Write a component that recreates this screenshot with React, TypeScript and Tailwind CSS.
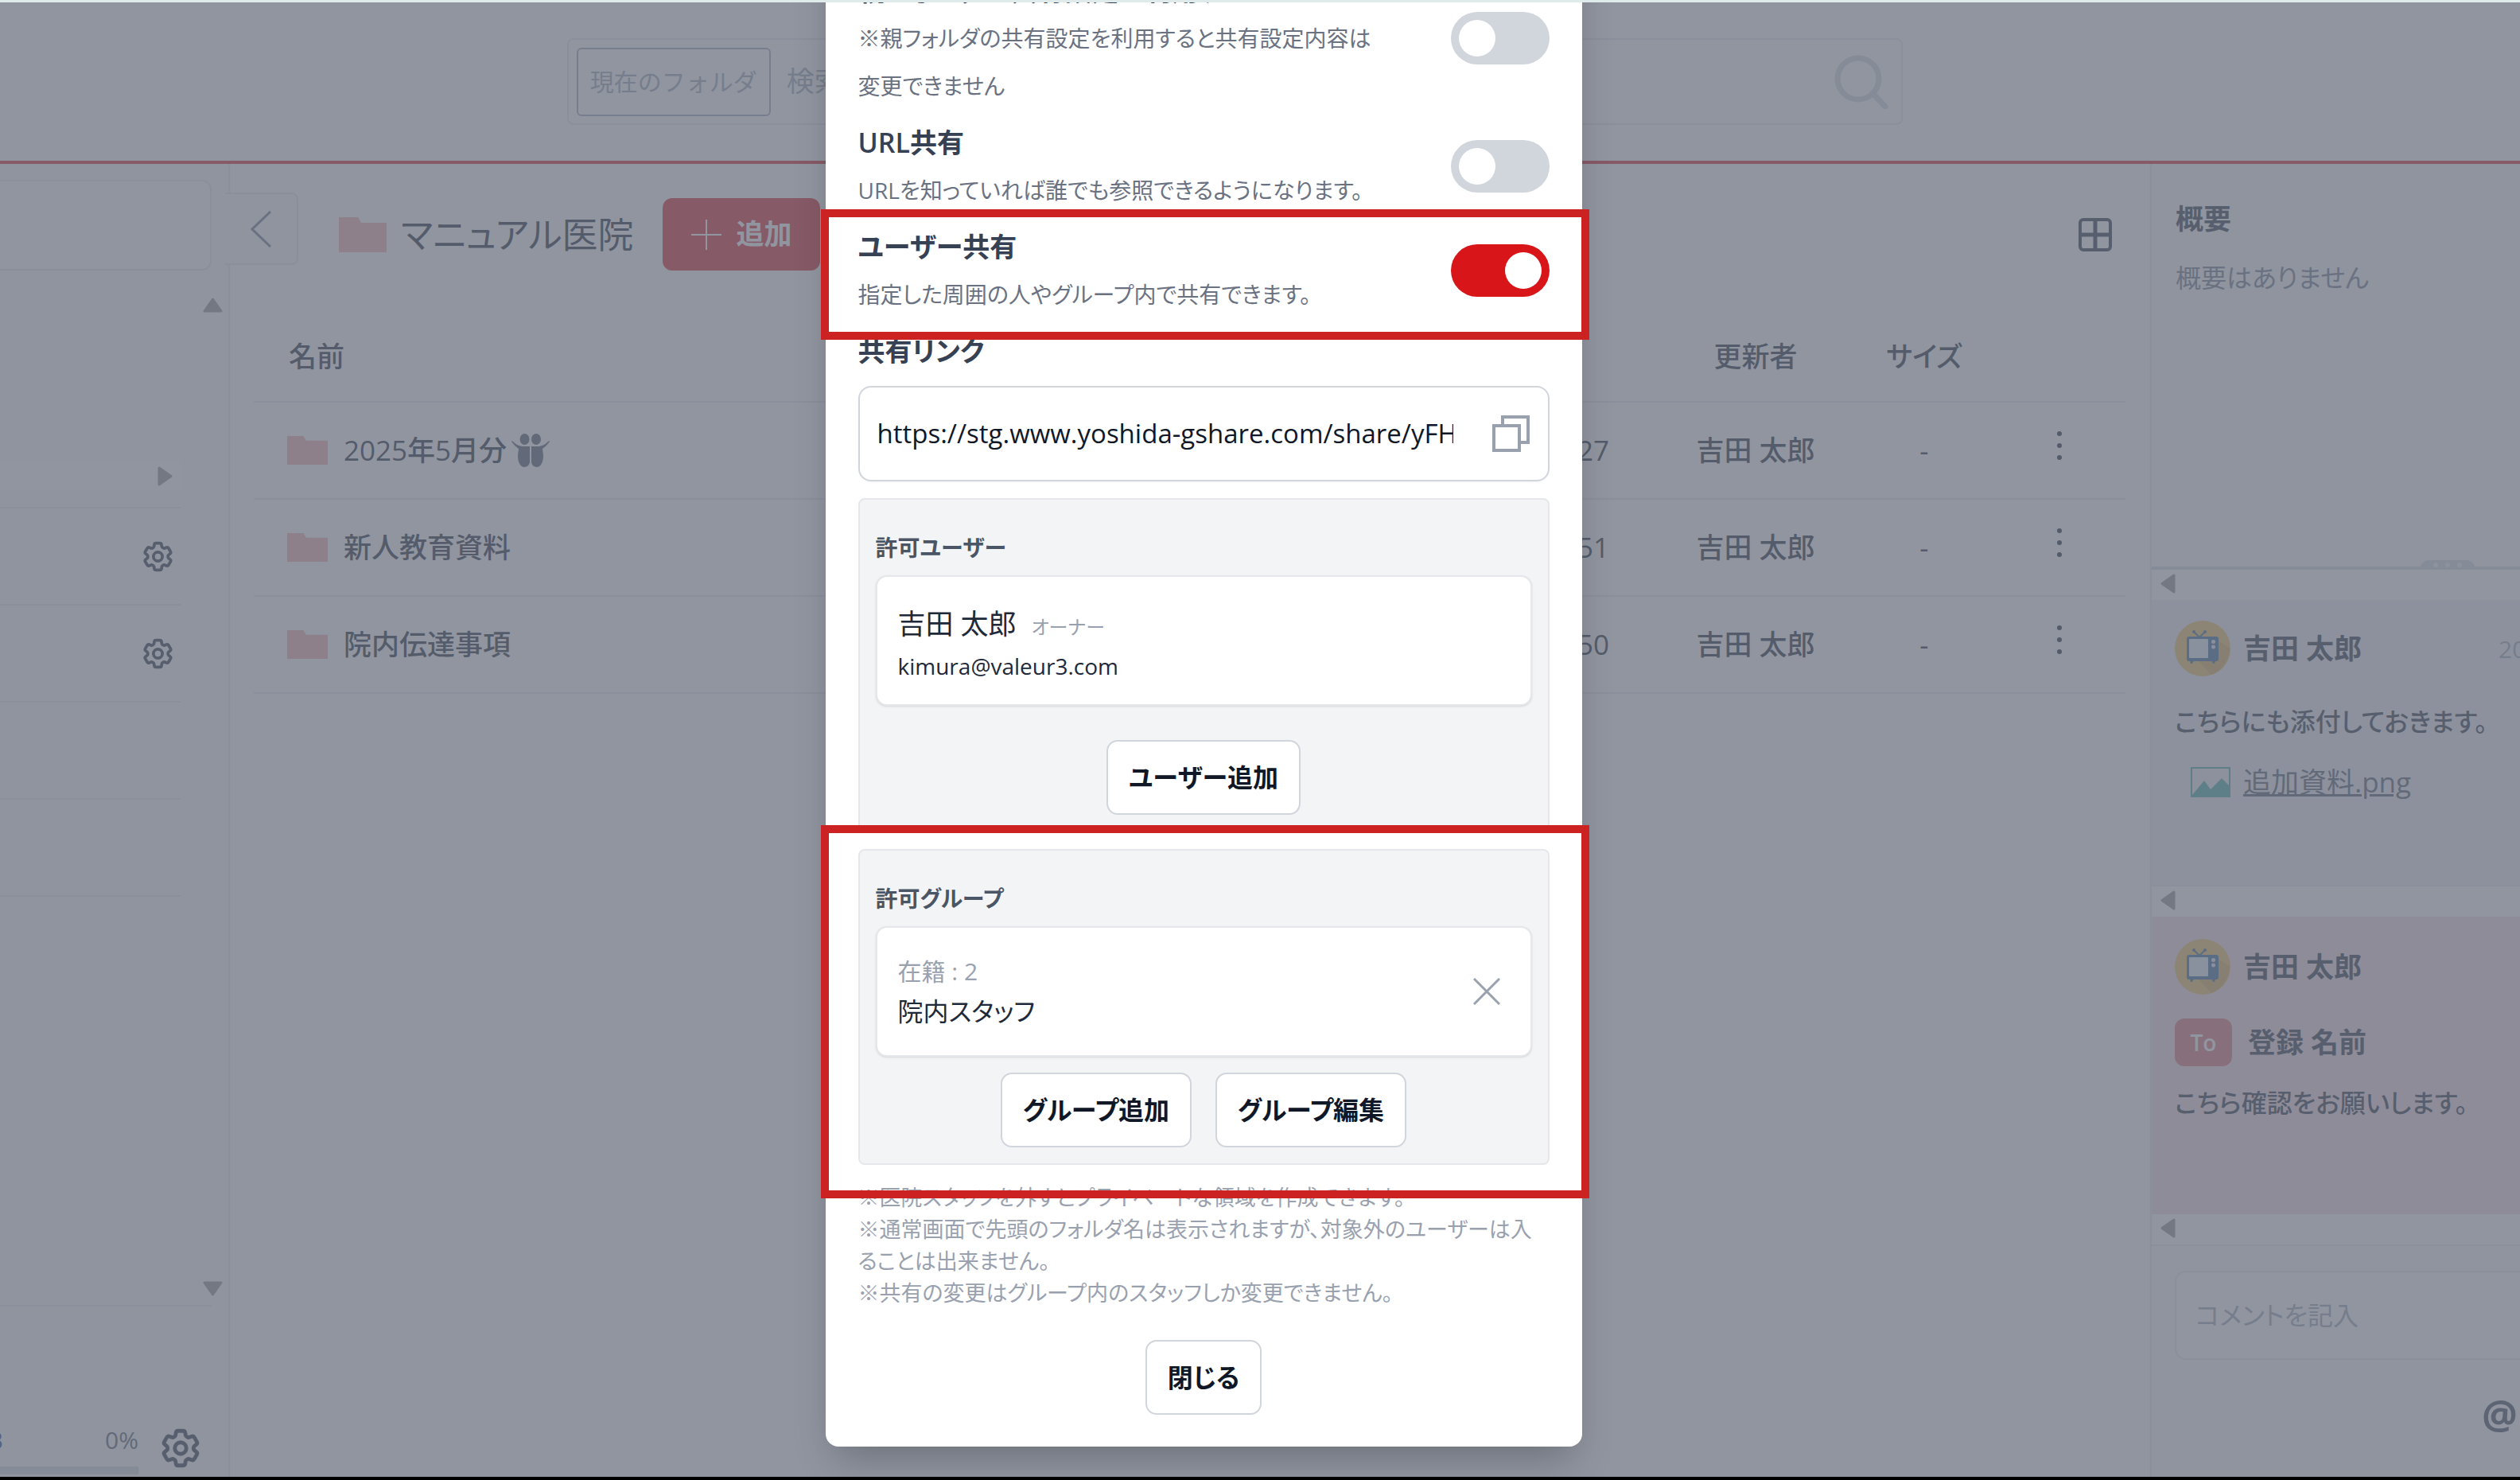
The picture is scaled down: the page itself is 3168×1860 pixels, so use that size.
import React, { useState } from "react";
import { HiOutlineCog6Tooth } from "react-icons/hi2";

const files = [
  { name: "2025年5月分", time: "10:27", owner: "吉田 太郎", shared: true },
  { name: "新人教育資料", time: "10:51", owner: "吉田 太郎", shared: false },
  { name: "院内伝達事項", time: "10:50", owner: "吉田 太郎", shared: false },
];

const buttonClass =
  "h-[94px] rounded-[14px] border-2 border-gray-300 bg-white px-[26px] text-[32px] font-semibold text-gray-900";

function FolderIcon({ className }: { className: string }) {
  return (
    <svg viewBox="0 0 60 44" preserveAspectRatio="none" className={className}>
      <path d="M0 0h24l4 7h32v37H0z" fill="#f4aaa8" />
    </svg>
  );
}

function SharedIcon() {
  return (
    <svg viewBox="0 0 48 42" className="h-[42px] w-[48px] text-gray-600" fill="currentColor">
      <ellipse cx="16.500" cy="7" rx="6" ry="7" />
      <ellipse cx="31" cy="7" rx="6" ry="7" />
      <path d="M1 9c5 5 9 7 14 7h8v19c0 4-3 7-7 7-5 0-8-7-8-14 0-4 1-6 1-9C6 17 3 14 0 10z" />
      <path d="M47 9c-5 5-9 7-14 7h-8v19c0 4 3 7 7 7 5 0 8-7 8-14 0-4-1-6-1-9 3-2 6-5 9-9z" />
    </svg>
  );
}

// Scrollbar arrow, drawn pointing left and turned by the caller
function Arrow({ className = "" }: { className?: string }) {
  return (
    <svg viewBox="0 0 19 25" className={`h-[25px] w-[19px] ${className}`}>
      <path
        d="M17 2v21L2 12.5z"
        fill="#8a8a8a"
        stroke="#8a8a8a"
        strokeWidth="3"
        strokeLinejoin="round"
      />
    </svg>
  );
}

function Avatar() {
  return (
    <svg viewBox="0 0 70 70" className="size-[70px] shrink-0">
      <circle cx="35" cy="35" r="35" fill="#f0bd50" />
      <path d="M54 25l15 9c0 16-9 29-23 34L30 51z" fill="#d9a94a" />
      <path d="M24 14l7 7 7-7" stroke="#2f5d94" strokeWidth="2" fill="none" />
      <circle cx="24" cy="14" r="2" fill="#2f5d94" />
      <circle cx="38" cy="14" r="2" fill="#2f5d94" />
      <rect x="15" y="20" width="40" height="31" rx="3" fill="#2f5d94" />
      <path d="M19 50h5l-2 4h-2zM46 50h5l-1 4h-2z" fill="#2f5d94" />
      <rect x="18" y="23" width="24" height="24" rx="1" fill="#e8eef5" />
      <circle cx="48.500" cy="26.500" r="2.500" fill="#e8eef5" />
      <circle cx="48.500" cy="33" r="2.500" fill="#e8eef5" />
    </svg>
  );
}

function ImageIcon() {
  return (
    <svg viewBox="0 0 50 38" className="h-[38px] w-[50px]">
      <rect x="1" y="1" width="48" height="36" fill="none" stroke="#3aa89c" strokeWidth="2" />
      <path d="M2 35l15-18 8 11 14-14 10 10v13H2z" fill="#3aa89c" />
    </svg>
  );
}

function Header() {
  return (
    <header className="flex h-[203px] shrink-0 items-center border-b-4 border-[#d81518] bg-white">
      <form className="ml-[22.500%] flex h-[109px] w-[53%] items-center rounded-lg border-2 border-gray-200 bg-white pr-4 pl-[10px]">
        <button
          type="button"
          className="h-[86px] w-[244px] shrink-0 rounded-md border-2 border-gray-400 text-[30px] whitespace-nowrap text-gray-400 [font-feature-settings:normal]"
        >
          現在のフォルダ
        </button>
        <input
          type="search"
          aria-label="検索"
          placeholder="検索"
          className="ml-[20px] min-w-0 flex-1 text-[35px] placeholder:text-gray-400"
        />
        <svg viewBox="0 0 68 68" className="size-[68px] text-gray-300" fill="none" stroke="currentColor">
          <circle cx="30" cy="30" r="26" strokeWidth="7" />
          <path d="M48 48l16 17" strokeWidth="7" strokeLinecap="round" />
        </svg>
      </form>
    </header>
  );
}

function Sidebar() {
  return (
    <aside className="flex w-[289px] shrink-0 flex-col border-r-2 border-gray-200 bg-gray-50">
      <div className="mt-[20px] mr-[21px] h-[114px] rounded-r-xl border-2 border-l-0 border-gray-200 bg-white" />
      <div className="mt-[23px] flex flex-1 justify-between">
        <ul className="w-[227px]">
          <li className="flex h-[276px] items-end border-b-2 border-gray-200 pb-[20px]">
            <div className="flex h-[38px] w-full items-center justify-end bg-white pr-[10px]">
              <Arrow className="rotate-180" />
            </div>
          </li>
          {[true, true, false, false].map((hasSettings, index) => (
            <li
              key={index}
              className="flex h-[122px] items-center justify-end border-b-2 border-gray-200 pr-[6px] text-[45px] text-gray-800"
            >
              {hasSettings && (
                <button aria-label="設定">
                  <HiOutlineCog6Tooth strokeWidth={2} />
                </button>
              )}
            </li>
          ))}
        </ul>
        <div className="flex w-[40px] flex-col items-center justify-between py-2">
          <Arrow className="rotate-90" />
          <Arrow className="-rotate-90" />
        </div>
      </div>
      <div className="mr-[21px] flex h-[216px] items-end border-t-2 border-gray-200 pb-[3px]">
        <div className="w-[174px]">
          <div className="flex justify-between text-[30px] leading-[40px] text-gray-600">
            <span className="flex w-1 justify-end overflow-hidden text-blue-900">GB</span>
            <span>0%</span>
          </div>
          <div className="mt-[13px] h-[10px] bg-gray-300" />
        </div>
        <button aria-label="容量設定" className="mb-[4px] ml-[24px] text-[58px] text-gray-800">
          <HiOutlineCog6Tooth strokeWidth={2} />
        </button>
      </div>
    </aside>
  );
}

function FileList() {
  return (
    <main className="min-w-0 flex-1 bg-white">
      <div className="flex h-[187px] items-start pt-[36px] pr-[48px]">
        <button
          aria-label="戻る"
          className="-ml-[6px] flex h-[91px] w-[92px] items-center justify-center rounded-r-lg border-2 border-l-0 border-gray-200 bg-gray-50 text-gray-500"
        >
          <svg viewBox="0 0 26 46" className="h-[46px] w-[26px]" fill="none" stroke="currentColor">
            <path d="M25 1L2 23l23 22" strokeWidth="3" />
          </svg>
        </button>
        <div className="mt-[7px] ml-[51px] flex h-[91px] flex-1 items-center whitespace-nowrap">
          <FolderIcon className="h-[44px] w-[60px]" />
          <h1 className="ml-[18px] text-[45px] text-gray-900">マニュアル医院</h1>
          <button className="ml-[36px] flex h-[91px] w-[198px] items-center justify-center gap-[18px] rounded-xl bg-[#d81518] text-[35px] font-semibold text-white">
            <svg viewBox="0 0 40 40" className="size-[40px]" stroke="currentColor" strokeWidth="2">
              <path d="M20 1v38M1 20h38" />
            </svg>
            追加
          </button>
          <button aria-label="グリッド表示" className="ml-auto text-gray-800">
            <svg viewBox="0 0 42 42" className="size-[42px]" fill="none" stroke="currentColor">
              <rect x="2" y="2" width="38" height="38" rx="4" strokeWidth="4" />
              <path d="M21 2v38M2 21h38" strokeWidth="5" />
            </svg>
          </button>
        </div>
      </div>
      <div className="pr-[31px] pl-[30px]">
        <table className="w-full table-fixed text-[35px] text-gray-900">
          <colgroup>
            <col />
            <col className="w-[300px]" />
            <col className="w-[250px]" />
            <col className="w-[174px]" />
            <col className="w-[166px]" />
          </colgroup>
          <thead>
            <tr className="h-[112px] border-b-2 border-gray-200">
              <th className="pl-[44px] text-left font-medium">名前</th>
              <th className="font-medium">更新日</th>
              <th className="font-medium">更新者</th>
              <th className="font-medium">サイズ</th>
              <th />
            </tr>
          </thead>
          <tbody>
            {files.map((file) => (
              <tr key={file.name} className="h-[122px] border-b-2 border-gray-200">
                <td className="pl-[42px]">
                  <div className="flex items-center font-medium">
                    <FolderIcon className="mr-[20px] h-[36px] w-[51px]" />
                    {file.name}
                    <span className="ml-[6px]">{file.shared && <SharedIcon />}</span>
                  </div>
                </td>
                <td className="pr-[59px] text-right font-medium">{file.time}</td>
                <td className="text-center font-medium">{file.owner}</td>
                <td className="text-center font-medium">-</td>
                <td className="text-center">
                  <button aria-label="メニュー">
                    <svg viewBox="0 0 6 38" className="h-[38px] w-[6px]" fill="currentColor">
                      <circle cx="3" cy="4" r="3" />
                      <circle cx="3" cy="19" r="3" />
                      <circle cx="3" cy="34" r="3" />
                    </svg>
                  </button>
                </td>
              </tr>
            ))}
          </tbody>
        </table>
      </div>
    </main>
  );
}

function ScrollStrip() {
  return (
    <div className="flex h-[38px] items-center bg-white pb-[4px] pl-[11px]">
      <Arrow />
    </div>
  );
}

function CommentPanel() {
  return (
    <aside className="flex w-[465px] shrink-0 flex-col overflow-hidden border-l-2 border-gray-200 bg-gray-50 text-[35px] whitespace-nowrap text-gray-800">
      <section className="relative h-[510px] border-b-4 border-gray-300 pt-[43px] pl-[30px]">
        <h2 className="leading-[52px] font-semibold">概要</h2>
        <p className="mt-[22px] text-[32px] leading-[52px] text-gray-500">概要はありません</p>
        <div className="absolute right-[56px] -bottom-1 flex h-[12px] w-[70px] items-center justify-center gap-[9px] rounded-t-xl bg-gray-300">
          <span className="size-[6px] rounded-full bg-gray-100" />
          <span className="size-[6px] rounded-full bg-gray-100" />
          <span className="size-[6px] rounded-full bg-gray-100" />
        </div>
      </section>

      <div>
        <ScrollStrip />
        <article className="h-[358px] bg-[#edeff2] pt-[26px] pl-[29px]">
          <div className="flex items-center">
            <Avatar />
            <span className="ml-[16px] font-semibold">吉田 太郎</span>
            <time className="ml-[172px] text-[30px] text-gray-400">2025/05/27</time>
          </div>
          <p className="mt-[31px] text-[32px] leading-[52px] font-medium">
            こちらにも添付しておきます。
          </p>
          <div className="mt-[24px] flex items-center pl-[20px]">
            <ImageIcon />
            <a href="#file" className="ml-[16px] leading-[52px] text-gray-600 underline">
              追加資料.png
            </a>
          </div>
        </article>
      </div>

      <div className="border-t-2 border-gray-200">
        <ScrollStrip />
        <article className="h-[374px] bg-[#f6dce1] pt-[28px] pl-[29px]">
          <div className="flex items-center">
            <Avatar />
            <span className="ml-[16px] font-semibold">吉田 太郎</span>
          </div>
          <div className="mt-[30px] flex items-center">
            <span className="flex h-[60px] w-[72px] items-center justify-center rounded-xl bg-[#e06a70] text-[28px] font-semibold text-white">
              To
            </span>
            <span className="ml-[20px] leading-[52px] font-semibold">登録 名前</span>
          </div>
          <p className="mt-[20px] text-[32px] leading-[52px] font-medium">
            こちら確認をお願いします。
          </p>
        </article>
        <ScrollStrip />
      </div>

      <div className="flex-1 border-t-2 border-gray-200 pt-[31px] pl-[29px]">
        <textarea
          aria-label="コメント"
          placeholder="コメントを記入"
          className="block h-[112px] w-[460px] resize-none rounded-[14px] border-2 border-gray-200 bg-white px-[24px] py-[28px] text-[32px] leading-[52px] placeholder:text-gray-400"
        />
        <button aria-label="メンション" className="ml-[386px] pt-[38px] text-[50px] leading-[60px] font-bold text-gray-700">
          @
        </button>
      </div>
    </aside>
  );
}

// Red frame that points out a part of the dialog
function Highlight({ className }: { className: string }) {
  return (
    <div
      className={`pointer-events-none absolute z-10 border-10 border-[#cc2222] ${className}`}
    />
  );
}

function ToggleRow({
  id,
  title,
  checked,
  onChange,
  children,
}: {
  id: string;
  title: string;
  checked: boolean;
  onChange: (value: boolean) => void;
  children: React.ReactNode;
}) {
  return (
    <div className="flex items-center justify-between whitespace-nowrap">
      <div>
        <label htmlFor={id} className="block text-[34px] leading-[60px] font-semibold text-gray-700">
          {title}
        </label>
        <p className="text-[28px] leading-[60px] text-gray-500">{children}</p>
      </div>
      <input
        id={id}
        type="checkbox"
        role="switch"
        checked={checked}
        onChange={(e) => onChange(e.target.checked)}
        className="h-[66px] w-[124px] shrink-0 appearance-none rounded-full bg-gray-300 p-[10px] before:block before:size-[46px] before:rounded-full before:bg-white checked:bg-[#d81518] checked:before:ml-[58px]"
      />
    </div>
  );
}

function ShareDialog() {
  const [useParent, setUseParent] = useState(false);
  const [urlShare, setUrlShare] = useState(false);
  const [userShare, setUserShare] = useState(true);

  return (
    <div
      role="dialog"
      aria-label="共有設定"
      className="w-[951px] shrink-0 rounded-[16px] bg-white px-[41px] pt-[80px] pb-[40px] shadow-2xl"
    >
      <div className="flex flex-col gap-[11px]">
        <ToggleRow
          id="parent"
          title="親フォルダの共有設定を利用する"
          checked={useParent}
          onChange={setUseParent}
        >
          ※親フォルダの共有設定を利用すると共有設定内容は
          <br />
          変更できません
        </ToggleRow>
        <ToggleRow id="url" title="URL共有" checked={urlShare} onChange={setUrlShare}>
          URLを知っていれば誰でも参照できるようになります。
        </ToggleRow>
        <div className="relative">
          <ToggleRow id="user" title="ユーザー共有" checked={userShare} onChange={setUserShare}>
            指定した周囲の人やグループ内で共有できます。
          </ToggleRow>
          <Highlight className="-top-[17px] -right-[50px] -bottom-[27px] -left-[47px]" />
        </div>
      </div>

      <label
        htmlFor="link"
        className="mt-[11px] block text-[34px] leading-[60px] font-semibold text-gray-700"
      >
        共有リンク
      </label>
      <div className="mt-[14px] flex h-[120px] items-center rounded-[16px] border-2 border-gray-300 px-[22px] shadow-xs">
        <input
          id="link"
          readOnly
          value="https://stg.www.yoshida-gshare.com/share/yFHk2m"
          className="w-[724px] text-[33px] text-gray-900"
        />
        <button aria-label="コピー" className="ml-auto text-gray-400">
          <svg viewBox="0 0 48 48" className="size-[48px]" fill="none" stroke="currentColor" strokeWidth="4">
            <path d="M13 14V3h32v32H34" />
            <path d="M2 14h32v31H2z" />
          </svg>
        </button>
      </div>

      <section className="mt-[21px] rounded-[8px] border-2 border-gray-200 bg-gray-100 px-[20px] pt-[35px] pb-[20px]">
        <h3 className="text-[28px] leading-[50px] font-semibold text-gray-600">許可ユーザー</h3>
        <div className="mt-[10px] flex h-[164px] flex-col justify-center rounded-[14px] border-2 border-gray-200 bg-white px-[26px] pt-[10px] text-gray-800 shadow-sm">
          <p className="text-[35px] leading-[50px]">
            吉田 太郎 <span className="ml-[10px] text-[24px] text-gray-400">オーナー</span>
          </p>
          <p className="text-[28px] leading-[48px]">kimura@valeur3.com</p>
        </div>
        <div className="mt-[43px] flex justify-center">
          <button className={buttonClass}>ユーザー追加</button>
        </div>
      </section>

      <section className="relative mt-[21px] rounded-[8px] border-2 border-gray-200 bg-gray-100 px-[20px] pt-[35px] pb-[20px]">
        <h3 className="text-[28px] leading-[50px] font-semibold text-gray-600">許可グループ</h3>
        <div className="mt-[10px] flex h-[164px] items-center justify-between rounded-[14px] border-2 border-gray-200 bg-white pr-[38px] pl-[26px] text-gray-800 shadow-sm">
          <div>
            <p className="text-[30px] leading-[50px] text-gray-400">在籍 : 2</p>
            <p className="text-[32px] leading-[50px]">院内スタッフ</p>
          </div>
          <button aria-label="削除" className="text-gray-400">
            <svg viewBox="0 0 34 34" className="size-[34px]" stroke="currentColor" strokeWidth="3">
              <path d="M1 1l32 32M33 1L1 33" />
            </svg>
          </button>
        </div>
        <div className="mt-[20px] flex justify-center gap-[30px]">
          <button className={buttonClass}>グループ追加</button>
          <button className={buttonClass}>グループ編集</button>
        </div>
        <Highlight className="-top-[32px] -right-[52px] -bottom-[44px] -left-[49px]" />
      </section>

      <p className="mt-[21px] text-[27px] leading-[40px] whitespace-nowrap text-gray-400">
        ※医院スタッフを外すとプライベートな領域を作成できます。
        <br />
        ※通常画面で先頭のフォルダ名は表示されますが、対象外のユーザーは入
        <br />
        ることは出来ません。
        <br />
        ※共有の変更はグループ内のスタッフしか変更できません。
      </p>
      <div className="mt-[39px] flex justify-center">
        <button className={buttonClass}>閉じる</button>
      </div>
    </div>
  );
}

export default function App() {
  return (
    <div className="relative flex h-screen flex-col overflow-hidden border-b-4 border-black bg-white font-['Open_Sans','Noto_Sans_CJK_JP',sans-serif] [font-feature-settings:'palt']">
      <div className="h-[3px] shrink-0 bg-[#dfeaeb]" />
      <Header />
      <div className="flex min-h-0 flex-1">
        <Sidebar />
        <FileList />
        <CommentPanel />
      </div>
      <div className="absolute inset-x-0 top-[3px] bottom-0 flex items-end justify-center overflow-hidden bg-[#6b7280]/75 pr-[142px] pb-[38px]">
        <ShareDialog />
      </div>
    </div>
  );
}
